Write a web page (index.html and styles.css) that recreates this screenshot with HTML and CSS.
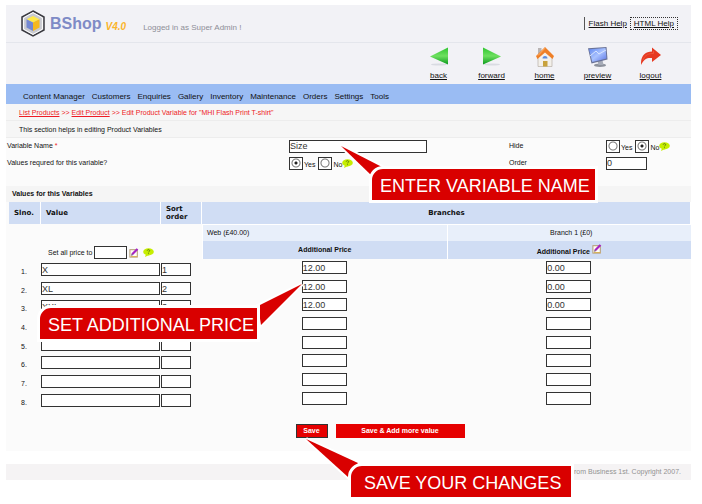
FILE: index.html
```
<!DOCTYPE html>
<html lang="en">
<head>
<meta charset="utf-8">
<title>BShop - Edit Product Variable</title>
<link rel="stylesheet" href="styles.css">
</head>
<body>
<svg class="defs" aria-hidden="true">
  <defs>
    <linearGradient id="green" x1="0" y1="0" x2="0" y2="1"><stop offset="0" stop-color="#2fc52f"/><stop offset=".5" stop-color="#6fe060"/><stop offset="1" stop-color="#0a9a1c"/></linearGradient>
    <linearGradient id="screen" x1="0" y1="0" x2="1" y2="1"><stop offset="0" stop-color="#5f86ee"/><stop offset=".5" stop-color="#a9c2ff"/><stop offset="1" stop-color="#5b74e4"/></linearGradient>
    <symbol id="help" viewBox="0 0 11 9"><ellipse cx="5.5" cy="3.8" rx="5.3" ry="3.6" fill="#c6ee00"/><path d="M3 6l-1 3 4-2z" fill="#c6ee00"/><path d="M4.1 2.8c.2-1.6 2.8-1.5 2.6 0-.1.8-1.2.8-1.2 1.6M5.5 5.3v.8" fill="none" stroke="#5a7a10" stroke-width=".9"/></symbol>
    <symbol id="edit" viewBox="0 0 10 10"><rect x=".9" y="1.7" width="7.4" height="7.4" fill="#fffdf4" stroke="#b39a72"/><path d="M2 8.5h6.5" stroke="#d8b35c"/><path d="M3.2 6.3L8.5.9" stroke="#a524c4" stroke-width="2.2"/><path d="M2.2 7.7l.4-2 1.5 1.4z" fill="#4c2462"/></symbol>
  </defs>
</svg>
<div class="page">
  <header class="top">
    <svg class="logo" viewBox="0 0 24 27" aria-hidden="true">
      <path d="M12 1l11 6v13l-11 6-11-6V7z" fill="#c9cad0" stroke="#3a3a40" stroke-width="1.5"/>
      <path d="M12 2.600l9.400 5.200v11.400L12 24.400l-9.400-5.200V7.800z" fill="none" stroke="#fff"/>
      <path d="M12 6l6.500 3.300L12 12.500 5.500 9.300z" fill="#ffe94a"/>
      <path d="M5.500 9.300l6.500 3.200V21l-6.500-3.500z" fill="#7488d2"/>
      <path d="M18.500 9.300L12 12.500V21l6.500-3.500z" fill="#f6b81e"/>
    </svg>
    <span class="brand">BShop</span>
    <span class="version">V4.0</span>
    <span class="login">Logged in as Super Admin !</span>
    <nav class="help-links" aria-label="Help">
      <a href="#flash">Flash Help</a>
      <a class="current" href="#html">HTML Help</a>
    </nav>
  </header>
  <nav class="tools" aria-label="Tools">
    <a href="#back"><svg viewBox="0 0 20 20"><ellipse cx="10" cy="17.500" rx="8" ry="1" fill="#d9dbe2"/><path d="M19 .5v17L1 9.500z" fill="url(#green)"/></svg>back</a>
    <a href="#forward"><svg viewBox="0 0 20 20"><ellipse cx="10" cy="17.500" rx="8" ry="1" fill="#d9dbe2"/><path d="M1 .5v17l18-8z" fill="url(#green)"/></svg>forward</a>
    <a href="#home"><svg viewBox="0 0 20 20"><path d="M3 9v10.500h14V9l-7-6z" fill="#f3f0ea" stroke="#b8b0a8" stroke-width=".7"/><path d="M3 1h3.500v6H3z" fill="#b9b4b4"/><path d="M10 0L1 9l1.500 3L10 5.500l7.500 6.500L19 9z" fill="#ef7f27"/><path d="M10 1.200L3 8.500" stroke="#ffb36a" fill="none"/><rect x="8" y="14" width="4.500" height="5.500" fill="#c8a23c"/><path d="M7.500 11.500a2.500 2.500 0 015 0z" fill="#5b8be0"/></svg>home</a>
    <a href="#preview"><svg viewBox="0 0 20 20"><ellipse cx="12" cy="18.300" rx="6" ry="1.700" fill="#8c919c"/><path d="M9.500 14l5-1 1 5h-5z" fill="#a6abb8"/><path d="M0 1.200L18.500 0l1 12.500L3.500 16.500z" fill="#687196"/><path d="M1 2.200L17.500 1l1 10.600L4.300 15z" fill="url(#screen)"/><path d="M2 9l6-5 3 3 7-4" stroke="#d8e4ff" fill="none"/></svg>preview</a>
    <a href="#logout"><svg viewBox="0 0 20 20"><path d="M0 18C-.5 9 4 4.500 11 4.500V.5l9 7.500-9 7v-4C6 10.500 3 12 0 18z" fill="#e63a22"/><path d="M2 13C4 7.500 8 6.500 12.500 6.500V4" fill="none" stroke="#f0563c"/></svg>logout</a>
  </nav>
  <nav class="menu" aria-label="Main">
    <a href="#content">Content Manager</a>
    <a href="#customers">Customers</a>
    <a href="#enquiries">Enquiries</a>
    <a href="#gallery">Gallery</a>
    <a href="#inventory">Inventory</a>
    <a href="#maintenance">Maintenance</a>
    <a href="#orders">Orders</a>
    <a href="#settings">Settings</a>
    <a href="#tools">Tools</a>
  </nav>
  <p class="crumbs"><a href="#list">List Products</a> &gt;&gt; <a href="#product">Edit Product</a> &gt;&gt; Edit Product Variable for "MHI Flash Print T-shirt"</p>
  <p class="intro">This section helps in editing Product Variables</p>
  <form class="content">
    <div class="fields">
      <label for="name">Variable Name <span class="required">*</span></label>
      <div><input class="name" id="name" type="text" value="Size"></div>
      <span id="hide">Hide</span>
      <div class="choices" role="group" aria-labelledby="hide">
        <input type="radio" name="hide" id="hide-yes"><label for="hide-yes">Yes</label>
        <input type="radio" name="hide" id="hide-no" checked><label for="hide-no">No</label><svg class="help"><use href="#help"/></svg>
      </div>
      <span id="required">Values requred for this variable?</span>
      <div class="choices" role="group" aria-labelledby="required">
        <input type="radio" name="required" id="req-yes" checked><label for="req-yes">Yes</label>
        <input type="radio" name="required" id="req-no"><label for="req-no">No</label><svg class="help"><use href="#help"/></svg>
      </div>
      <label for="order">Order</label>
      <div><input class="order" id="order" type="text" value="0"></div>
    </div>
    <h2>Values for this Variables</h2>
    <table>
      <colgroup><col class="col-no"><col class="col-value"><col class="col-sort"><col><col></colgroup>
      <thead>
        <tr class="heads"><th>Slno.</th><th>Value</th><th>Sort order</th><th class="branches" colspan="2">Branches</th></tr>
        <tr class="names">
          <td class="set-all" colspan="3" rowspan="2"><div><label for="all">Set all price to</label><input id="all" type="text"><svg class="edit"><use href="#edit"/></svg><svg class="help"><use href="#help"/></svg></div></td>
          <td>Web (£40.00)</td><td class="center">Branch 1 (£0)</td>
        </tr>
        <tr class="prices"><th>Additional Price</th><th>Additional Price <svg class="edit"><use href="#edit"/></svg></th></tr>
      </thead>
      <tbody>
        <tr><td>1.</td><td><input aria-label="Value 1" value="X"></td><td><input aria-label="Sort 1" value="1"></td><td><input aria-label="Web price 1" value="12.00"></td><td><input aria-label="Branch price 1" value="0.00"></td></tr>
        <tr><td>2.</td><td><input aria-label="Value 2" value="XL"></td><td><input aria-label="Sort 2" value="2"></td><td><input aria-label="Web price 2" value="12.00"></td><td><input aria-label="Branch price 2" value="0.00"></td></tr>
        <tr><td>3.</td><td><input aria-label="Value 3" value="XXL"></td><td><input aria-label="Sort 3" value="3"></td><td><input aria-label="Web price 3" value="12.00"></td><td><input aria-label="Branch price 3" value="0.00"></td></tr>
        <tr><td>4.</td><td><input aria-label="Value 4"></td><td><input aria-label="Sort 4"></td><td><input aria-label="Web price 4"></td><td><input aria-label="Branch price 4"></td></tr>
        <tr><td>5.</td><td><input aria-label="Value 5"></td><td><input aria-label="Sort 5"></td><td><input aria-label="Web price 5"></td><td><input aria-label="Branch price 5"></td></tr>
        <tr><td>6.</td><td><input aria-label="Value 6"></td><td><input aria-label="Sort 6"></td><td><input aria-label="Web price 6"></td><td><input aria-label="Branch price 6"></td></tr>
        <tr><td>7.</td><td><input aria-label="Value 7"></td><td><input aria-label="Sort 7"></td><td><input aria-label="Web price 7"></td><td><input aria-label="Branch price 7"></td></tr>
        <tr><td>8.</td><td><input aria-label="Value 8"></td><td><input aria-label="Sort 8"></td><td><input aria-label="Web price 8"></td><td><input aria-label="Branch price 8"></td></tr>
      </tbody>
    </table>
    <div class="actions">
      <button class="save" type="button">Save</button>
      <button class="save-more" type="button">Save &amp; Add more value</button>
    </div>
  </form>
  <footer>rom Business 1st. Copyright 2007.</footer>

  <div class="callout callout-name">
    <svg viewBox="0 0 46 34"><path d="M3 3L44 24 33 32z"/></svg>
    <p>ENTER VARIABLE NAME</p>
  </div>
  <div class="callout callout-price">
    <svg viewBox="0 0 50 48"><path d="M47 3L3 25 6 44z"/></svg>
    <p>SET ADDITIONAL PRICE</p>
  </div>
  <div class="callout callout-save">
    <svg viewBox="0 0 58 44"><path d="M3 3L55 27 45 41z"/></svg>
    <p>SAVE YOUR CHANGES</p>
  </div>
</div>
</body>
</html>
```
FILE: styles.css
```
* {
  box-sizing: border-box;
}

body {
  margin: 5px 11px 0 6px;
  background: #fff;
  color: #111;
  font: 7px/10px "Liberation Sans", Arial, sans-serif;
}

p, h2 {
  margin: 0;
}

a {
  color: inherit;
}

svg {
  display: block;
}

.defs {
  position: absolute;
  width: 0;
  height: 0;
}

.page {
  position: relative;
  padding-bottom: 20px;
}

/* Header */
.top {
  display: flex;
  align-items: center;
  height: 38px;
  padding: 0 13px 0 15px;
  background: #f2f2f6;
  border-bottom: 1px solid #e4e6ec;
}

.logo {
  width: 24px;
  height: 27px;
}

.brand {
  margin-left: 5px;
  color: #7f8bc6;
  font-family: "Liberation Sans Narrow", "Liberation Sans", Arial, sans-serif;
  font-size: 16px;
  font-weight: bold;
}

.version {
  margin: 6px 0 0 4px;
  color: #fab52c;
  font-size: 10px;
  font-weight: bold;
  font-style: italic;
}

.login {
  margin: 8px 0 0 17px;
  color: #8e8e96;
  font-size: 8px;
}

.help-links {
  display: flex;
  gap: 3px;
  margin-left: auto;
  font-size: 8px;
  line-height: 11px;
}

.help-links a {
  padding: 1px 0 1px 4px;
  border-left: 1px solid #555;
}

.help-links .current {
  padding: 0 3px;
  border: 1px dotted #333;
}

.tools {
  display: flex;
  justify-content: flex-end;
  height: 41px;
  padding: 4px 14px 0 0;
  background: #f2f2f6;
}

.tools a {
  display: flex;
  flex-direction: column;
  align-items: center;
  gap: 4px;
  width: 53px;
  font-size: 8px;
}

.tools svg {
  width: 20px;
  height: 20px;
}

.menu {
  display: flex;
  gap: 7px;
  height: 20px;
  padding: 0 17px;
  background: #9abcf3;
  font-size: 8px;
  line-height: 26px;
}

.menu a {
  text-decoration: none;
}

.crumbs, .intro {
  height: 17px;
  padding: 0 13px;
  background: #f6f6f6;
  border-bottom: 1px solid #ededed;
  line-height: 18px;
}

.crumbs {
  color: #ee1c25;
}

/* Form */
.content {
  background: #fbfbfb;
  padding-bottom: 13px;
}

input {
  display: block;
  height: 13px;
  margin: 0;
  padding: 0;
  border: 1px solid #333;
  border-radius: 0;
  background: #fff;
  color: #333;
  font: 9px/11px "Liberation Sans", Arial, sans-serif;
}

.fields {
  display: grid;
  grid-template-columns: 282fr 220fr 97fr 85fr;
  row-gap: 3px;
  align-items: center;
  padding: 1px 0 16px 1px;
}

.required {
  color: #ee1c25;
}

.name {
  width: 138px;
}

.order {
  width: 41px;
}

.choices {
  display: flex;
  align-items: center;
}

.choices label {
  margin: 4px 3px 0 1px;
}

.choices label:last-of-type {
  margin-right: 0;
}

input[type="radio"] {
  appearance: none;
  width: 14px;
  background: radial-gradient(circle at 6px 5px, #222 1px, transparent 2px), radial-gradient(circle at 6px 5px, #fff 3px, #777 4px, #fff 5px);
}

input[type="radio"]:not(:checked) {
  background: radial-gradient(circle at 6px 5px, #fff 3px, #777 4px, #fff 5px);
}

.help {
  width: 11px;
  height: 9px;
}

.edit {
  width: 10px;
  height: 10px;
}

h2 {
  padding-left: 6px;
  background: #f5f5f5;
  font-size: 7px;
  line-height: 16px;
}

/* Values table */
table {
  width: calc(100% - 3px);
  margin-left: 3px;
  border-collapse: separate;
  border-spacing: 0;
  table-layout: fixed;
}

th, td {
  padding: 0;
  vertical-align: top;
}

.col-no {
  width: 32px;
}

.col-value {
  width: 120px;
}

.col-sort {
  width: 41px;
}

.heads th {
  height: 22px;
  padding: 0 4px 0 5px;
  background: #d0ddf4;
  border-right: 1px solid #fff;
  font: bold 7px/8px "DejaVu Sans", Verdana, sans-serif;
  text-align: left;
  vertical-align: middle;
}

.heads .branches {
  text-align: center;
}

.names td {
  height: 17px;
  padding-left: 4px;
  background: #e8effa;
  border: 1px solid #fff;
  border-width: 1px 0 0 1px;
  vertical-align: middle;
}

.names .center {
  text-align: center;
}

.names .set-all {
  padding: 0 0 0 38px;
  background: none;
  border-color: transparent;
  vertical-align: bottom;
}

.set-all div {
  display: flex;
  align-items: center;
  gap: 2px;
}

.set-all input {
  width: 33px;
}

.set-all .help {
  margin-left: 2px;
}

.prices th {
  height: 18px;
  background: #d0ddf4;
  border-left: 1px solid #fff;
  vertical-align: middle;
}

.prices .edit {
  display: inline-block;
}

tbody td {
  height: 19px;
  padding-top: 2px;
}

tbody tr:nth-child(3n + 2) td {
  height: 18px;
}

tbody td:nth-child(-n + 3) {
  padding-top: 4px;
}

tbody td:first-child {
  padding: 8px 0 0 12px;
}

tbody input {
  width: 30px;
}

tbody td:nth-child(2) input {
  width: 119px;
}

tbody td:nth-child(n + 4) input {
  width: 45px;
  margin: 0 auto;
}

.actions {
  display: flex;
  justify-content: center;
  gap: 8px;
  padding: 16px 0 0 63px;
}

button {
  height: 14px;
  padding: 0;
  border: 0;
  background: #e60000;
  color: #fff;
  font: bold 7px/12px "Liberation Sans", Arial, sans-serif;
}

.save {
  width: 32px;
  border: 1px solid #333;
}

.save-more {
  width: 129px;
}

footer {
  margin-top: 13px;
  padding: 0 10px;
  background: #f5f3f4;
  color: #929292;
  line-height: 16px;
  text-align: right;
}

/* Annotations that lie over the page */
.callout {
  position: absolute;
}

.callout p {
  position: relative;
  height: 37px;
  padding: 3px 0 0 8px;
  border: 3px solid #fff;
  border-radius: 14px 0 0 0;
  background: #d90000;
  color: #fff;
  font-size: 18px;
  line-height: 28px;
  white-space: nowrap;
}

.callout svg {
  position: absolute;
  fill: #d90000;
  stroke: #fff;
  stroke-width: 4px;
  paint-order: stroke;
}

.callout-name {
  top: 161px;
  left: 363px;
}

.callout-name p {
  width: 229px;
}

.callout-name svg {
  top: -23px;
  left: -31px;
  width: 46px;
  height: 34px;
}

.callout-price {
  top: 300px;
  left: 31px;
}

.callout-price p {
  width: 223px;
}

.callout-price svg {
  top: -24px;
  left: 218px;
  width: 50px;
  height: 48px;
}

.callout-save {
  top: 458px;
  left: 342px;
}

.callout-save p {
  width: 226px;
  padding-left: 13px;
}

.callout-save svg {
  top: -27px;
  left: -45px;
  width: 58px;
  height: 44px;
}
```
